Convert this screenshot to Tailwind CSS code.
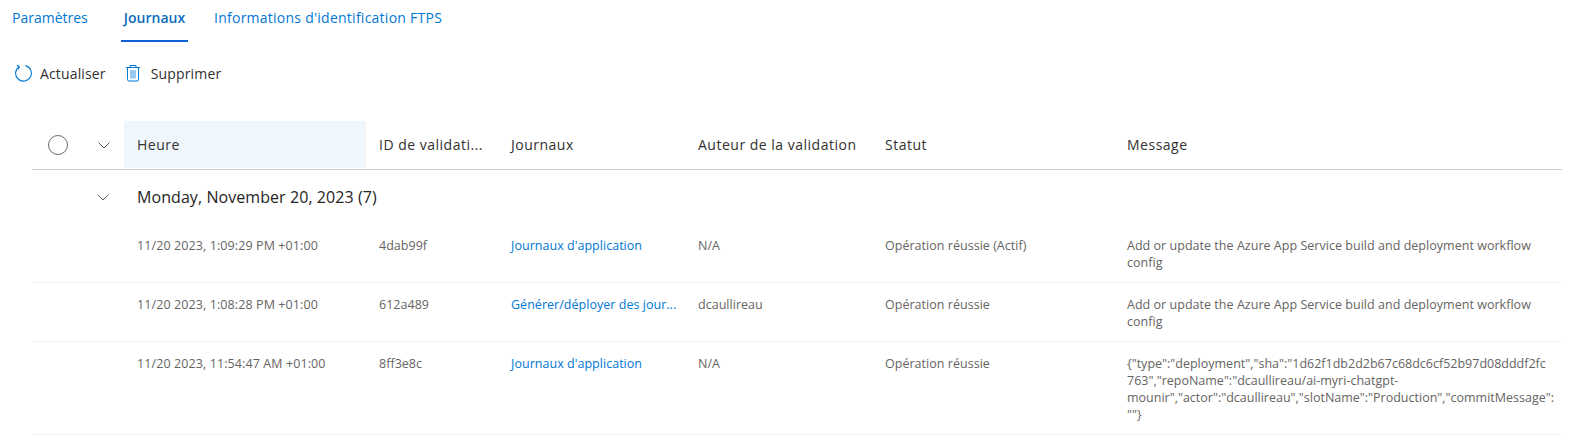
<!DOCTYPE html>
<html lang="fr">
<head>
<meta charset="utf-8">
<script src="https://cdn.jsdelivr.net/npm/@tailwindcss/browser@4"></script>
</head>
<body class="bg-white font-['Open_Sans','Noto_Sans',sans-serif] overflow-hidden">
<div class="w-[1585px] h-[440px] overflow-hidden">
  <nav class="flex h-[42px] pl-[12px] text-[14px] tracking-[0.25px] text-[#0078d4]">
    <a class="w-[109px] pt-[8px] leading-[20px] tracking-[0px]">Paramètres</a>
    <a class="w-[67px] h-[42px] pt-[8px] leading-[20px] font-semibold text-[#0f6cbd] border-b-2 border-[#0f5fd7] text-center tracking-[0px] whitespace-nowrap">Journaux</a>
    <a class="ml-[26px] pt-[8px] leading-[20px]">Informations d'identification FTPS</a>
  </nav>
  <div class="flex items-center h-[32px] mt-[15px] pl-[14px] text-[14px] tracking-[0.15px] text-[#323130]">
    <svg class="w-[18px] h-[18px] text-[#0078d4]" viewBox="0 0 18 18" fill="none" stroke="currentColor" stroke-width="1.1"><path d="M5.2 2.6A7.9 7.9 0 1 0 11.5 1.6"/><path d="M2.8 1.2 5.4 2.6 4.2 5.4"/></svg>
    <span class="ml-[8px]">Actualiser</span>
    <svg class="ml-[20px] w-[14px] h-[18px] text-[#0078d4]" viewBox="0 0 14 18" fill="none" stroke="currentColor" stroke-width="1"><path d="M0 3.5h14M4 3.5V1.5h6v2M1.5 3.5v12a1.5 1.5 0 0 0 1.5 1.5h8a1.5 1.5 0 0 0 1.5-1.5v-12"/><path stroke-width=".8" d="M5 6v8.5M7 6v8.5M9 6v8.5"/></svg>
    <span class="ml-[11px]">Supprimer</span>
  </div>
  <div class="ml-[32px] w-[1530px] mt-[32px]">
    <div class="flex items-center h-[49px] pb-px border-b border-[#c8cdd2] text-[14px] tracking-[0.5px] text-[#323130]">
      <div class="w-[92px] h-[47px] flex items-center shrink-0">
        <span class="ml-[16px] w-[20px] h-[20px] rounded-full border-[1.5px] border-[#6b6b6b]"></span>
        <svg class="ml-[28px] w-[16px] h-[16px]" viewBox="0 0 16 16" fill="none" stroke="#605e5c" stroke-width="1"><path d="M2.5 5.5 8 11l5.5-5.5"/></svg>
      </div>
      <div class="w-[242px] h-[47px] bg-[#eff6fc] flex items-center pl-[13px] shrink-0">Heure</div>
      <div class="w-[132px] pl-[13px] shrink-0 whitespace-nowrap">ID de validati...</div>
      <div class="w-[187px] pl-[13px] shrink-0">Journaux</div>
      <div class="w-[187px] pl-[13px] shrink-0 whitespace-nowrap">Auteur de la validation</div>
      <div class="w-[242px] pl-[13px] shrink-0">Statut</div>
      <div class="pl-[13px]">Message</div>
    </div>
    <div class="flex items-center h-[54px] text-[16px] tracking-[0.07px] text-[#252423]">
      <svg class="ml-[63px] w-[16px] h-[16px]" viewBox="0 0 16 16" fill="none" stroke="#605e5c" stroke-width="1"><path d="M2.5 5.5 8 11l5.5-5.5"/></svg>
      <span class="ml-[26px]">Monday, November 20, 2023 (7)</span>
    </div>
    <div class="text-[12.5px] leading-[17px] tracking-[0.03px] text-[#666462]">
      <div class="flex h-[59px] pt-[13px] border-b border-[#f0f0f0]">
        <div class="w-[334px] pl-[105px] shrink-0 whitespace-nowrap tracking-[0.1px]">11/20 2023, 1:09:29 PM +01:00</div>
        <div class="w-[132px] pl-[13px] shrink-0">4dab99f</div>
        <div class="w-[187px] pl-[13px] shrink-0 text-[#0078d4]">Journaux d'application</div>
        <div class="w-[187px] pl-[13px] shrink-0">N/A</div>
        <div class="w-[242px] pl-[13px] shrink-0">Opération réussie (Actif)</div>
        <div class="pl-[13px] w-[428px]">Add or update the Azure App Service build and deployment workflow config</div>
      </div>
      <div class="flex h-[59px] pt-[13px] border-b border-[#f0f0f0]">
        <div class="w-[334px] pl-[105px] shrink-0 whitespace-nowrap tracking-[0.1px]">11/20 2023, 1:08:28 PM +01:00</div>
        <div class="w-[132px] pl-[13px] shrink-0">612a489</div>
        <div class="w-[187px] pl-[13px] shrink-0 text-[#0078d4] whitespace-nowrap">Générer/déployer des jour...</div>
        <div class="w-[187px] pl-[13px] shrink-0">dcaullireau</div>
        <div class="w-[242px] pl-[13px] shrink-0">Opération réussie</div>
        <div class="pl-[13px] w-[428px]">Add or update the Azure App Service build and deployment workflow config</div>
      </div>
      <div class="flex h-[93px] pt-[13px] border-b border-[#f0f0f0]">
        <div class="w-[334px] pl-[105px] shrink-0 whitespace-nowrap tracking-[0.1px]">11/20 2023, 11:54:47 AM +01:00</div>
        <div class="w-[132px] pl-[13px] shrink-0">8ff3e8c</div>
        <div class="w-[187px] pl-[13px] shrink-0 text-[#0078d4]">Journaux d'application</div>
        <div class="w-[187px] pl-[13px] shrink-0">N/A</div>
        <div class="w-[242px] pl-[13px] shrink-0">Opération réussie</div>
        <div class="pl-[13px] whitespace-nowrap tracking-[0px]">{"type":"deployment","sha":"1d62f1db2d2b67c68dc6cf52b97d08dddf2fc<br>763","repoName":"dcaullireau/ai-myri-chatgpt-<br>mounir","actor":"dcaullireau","slotName":"Production","commitMessage":<br>""}</div>
      </div>
    </div>
  </div>
</div>
</body>
</html>
